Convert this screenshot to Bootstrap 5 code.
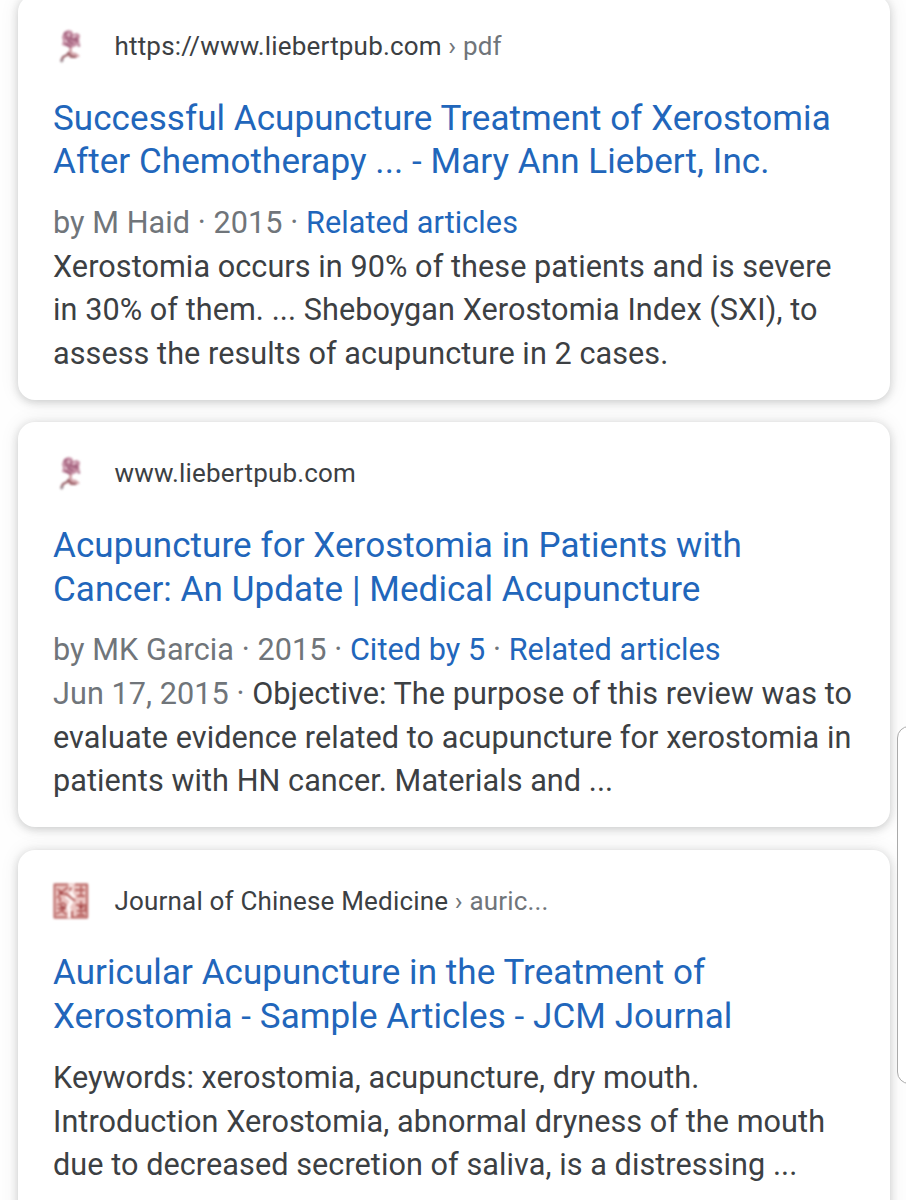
<!DOCTYPE html>
<html lang="en">
<head>
<meta charset="utf-8">
<meta name="viewport" content="width=device-width, initial-scale=1">
<title>Search results</title>
<link href="https://cdn.jsdelivr.net/npm/bootstrap@5.3.0/dist/css/bootstrap.min.css" rel="stylesheet">
<style>
html, body { height: 1200px; overflow: hidden; }
body { font-family: Roboto, "Noto Sans", sans-serif; background: #fefefe; color: #3c4043; }
.results { width: 872px; margin: -5px 0 0 18px; gap: 22.4px; }
.result { height: 405px; border: 0; border-radius: 17px; padding: 33px 0 0 35px; box-shadow: 0 2px 8px rgba(32,33,36,.2), 0 0 20px rgba(32,33,36,.08); white-space: nowrap; }
.source { height: 36px; margin-bottom: 32.5px; gap: 25.5px; font-size: 26px; line-height: 36px; letter-spacing: .18px; }
.crumb, .meta { color: #70757a; }
.favicon { width: 36px; height: 36px; filter: blur(.8px); }
.headline { font-size: 35px; line-height: 43.8px; letter-spacing: .07px; font-weight: 400; color: #2166bb; margin-bottom: 17px; }
.snippet { font-size: 30.6px; line-height: 43.65px; letter-spacing: .07px; }
.snippet a, .headline a { color: #2166bb; }
.scroll-handle { position: absolute; left: 897px; top: 726px; width: 30px; height: 358px; border: 1px solid #aaa; border-radius: 12px; background: #fff; }
</style>
</head>
<body class="position-relative">
<svg width="0" height="0" class="position-absolute" aria-hidden="true">
  <symbol id="rose" viewBox="0 0 36 36">
    <path d="M9 9l2-5 4-2 4 1 1 3 4-1 3 2-1 6 1 2-4 3-5 2-5-2-4-1 1-4z" fill="#c58ea3"/>
    <path d="M16 19h3v6h-3zM14 26l4-2 5 1 4 3-4 2-6 0z" fill="#d3a5ab"/>
    <path d="M11 7l3-3M13 8l2 5 5 3M18 6l-1 5 6 1M12 16l6 3M23 9l1 5M25 18l2-1" fill="none" stroke="#a15f7c" stroke-width="2"/>
    <path d="M15 6l2 2M20 9l3-1M12 12l2 2" fill="none" stroke="#e8ccd8" stroke-width="1.8"/>
    <path d="M16 24l-2 3-4 2-2 4M16 26l3 3 4 0" fill="none" stroke="#985d65" stroke-width="2.2"/>
    <path d="M10 31l-2 3" stroke="#9d8b92" stroke-width="2.5"/>
  </symbol>
  <symbol id="seal" viewBox="0 0 36 36">
    <rect x=".5" y=".5" width="35" height="35" rx="2" fill="#ebc4c1"/>
    <g fill="none" stroke="#b86462" stroke-width="1.8">
      <path d="M15 1.500H1.500v33H34v-33H22"/>
      <path d="M4 6l5 3 6-5M4 15l4-5 6 2M7 14v5M4 22l6-2 4 3-4 4-6-2M8 20v6M3 31l6-3 5 4"/>
      <path d="M22 7h10M24 13h8M28 3v11M23 22h9v6h-8M28 18v14M24 32h8"/>
    </g>
    <path d="M18 2v8l3 5M13 13l6 5-4 6 2 5-1 6" fill="none" stroke="#fff8f7" stroke-width="3.6"/>
    <path d="M12 10l10 8M18 4l-1 4M19 28v7" fill="none" stroke="#b7605e" stroke-width="2"/>
    <path d="M8 24l4 1M6 9l4 2M26 24h4" stroke="#a34748" stroke-width="2.5"/>
  </symbol>
</svg>
<main class="results d-flex flex-column">
  <article class="card result">
    <div class="source d-flex align-items-center"><svg class="favicon"><use href="#rose"/></svg><div>https://www.liebertpub.com <span class="crumb">› pdf</span></div></div>
    <h2 class="headline"><a class="text-decoration-none" href="#">Successful Acupuncture Treatment of Xerostomia<br>After Chemotherapy ... - Mary Ann Liebert, Inc.</a></h2>
    <div class="snippet"><span class="meta">by M Haid · 2015 · </span><a class="text-decoration-none" href="#">Related articles</a><br>Xerostomia occurs in 90% of these patients and is severe<br>in 30% of them. ... Sheboygan Xerostomia Index (SXI), to<br>assess the results of acupuncture in 2 cases.</div>
  </article>
  <article class="card result">
    <div class="source d-flex align-items-center"><svg class="favicon"><use href="#rose"/></svg><div>www.liebertpub.com</div></div>
    <h2 class="headline"><a class="text-decoration-none" href="#">Acupuncture for Xerostomia in Patients with<br>Cancer: An Update | Medical Acupuncture</a></h2>
    <div class="snippet"><span class="meta">by MK Garcia · 2015 · </span><a class="text-decoration-none" href="#">Cited by 5</a><span class="meta"> · </span><a class="text-decoration-none" href="#">Related articles</a><br><span class="meta">Jun 17, 2015 · </span>Objective: The purpose of this review was to<br>evaluate evidence related to acupuncture for xerostomia in<br>patients with HN cancer. Materials and ...</div>
  </article>
  <article class="card result">
    <div class="source d-flex align-items-center"><svg class="favicon"><use href="#seal"/></svg><div>Journal of Chinese Medicine <span class="crumb">› auric...</span></div></div>
    <h2 class="headline"><a class="text-decoration-none" href="#">Auricular Acupuncture in the Treatment of<br>Xerostomia - Sample Articles - JCM Journal</a></h2>
    <div class="snippet">Keywords: xerostomia, acupuncture, dry mouth.<br>Introduction Xerostomia, abnormal dryness of the mouth<br>due to decreased secretion of saliva, is a distressing ...</div>
  </article>
</main>
<div class="scroll-handle"></div>
<script src="https://cdn.jsdelivr.net/npm/bootstrap@5.3.0/dist/js/bootstrap.bundle.min.js"></script>
</body>
</html>
